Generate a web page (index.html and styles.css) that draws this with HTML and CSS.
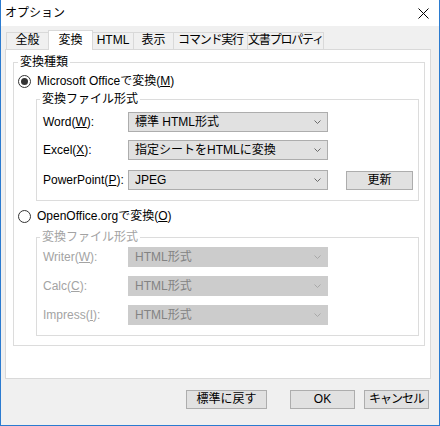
FILE: index.html
```html
<!DOCTYPE html>
<html lang="ja">
<head>
<meta charset="utf-8">
<title>オプション</title>
<link rel="stylesheet" href="styles.css">
</head>
<body>
<div class="window">
  <div class="titlebar">
    <span class="title">オプション</span>
    <svg class="close" width="11" height="11" viewBox="0 0 11 11"><path d="M0.5 0.5 L10.5 10.5 M10.5 0.5 L0.5 10.5" stroke="#000" stroke-width="1" fill="none"/></svg>
  </div>
  <div class="client">
    <div class="tabs">
      <div class="tab w43">全般</div>
      <div class="tab w45 active">変換</div>
      <div class="tab w42">HTML</div>
      <div class="tab w41">表示</div>
      <div class="tab w75 narrow">コマンド実行</div>
      <div class="tab w77 narrow">文書プロパティ</div>
    </div>
    <div class="page">
      <fieldset class="group outer">
        <legend>変換種類</legend>
        <div class="radio-row">
          <span class="radio checked"></span>
          <span>Microsoft Officeで変換(<u>M</u>)</span>
        </div>
        <fieldset class="group inner first">
          <legend>変換ファイル形式</legend>
          <div class="row">
            <span class="label">Word(<u>W</u>):</span>
            <div class="select"><span>標準 HTML形式</span><svg class="chev" width="7" height="4" viewBox="0 0 7 4"><path d="M0.5 0.5 L3.5 3.5 L6.5 0.5" stroke="#6a6a6a" fill="none"/></svg></div>
          </div>
          <div class="row gap8">
            <span class="label">Excel(<u>X</u>):</span>
            <div class="select"><span>指定シートをHTMLに変換</span><svg class="chev" width="7" height="4" viewBox="0 0 7 4"><path d="M0.5 0.5 L3.5 3.5 L6.5 0.5" stroke="#6a6a6a" fill="none"/></svg></div>
          </div>
          <div class="row gap10">
            <span class="label">PowerPoint(<u>P</u>):</span>
            <div class="select"><span>JPEG</span><svg class="chev" width="7" height="4" viewBox="0 0 7 4"><path d="M0.5 0.5 L3.5 3.5 L6.5 0.5" stroke="#6a6a6a" fill="none"/></svg></div>
            <div class="button refresh">更新</div>
          </div>
        </fieldset>
        <div class="radio-row second">
          <span class="radio"></span>
          <span>OpenOffice.orgで変換(<u>O</u>)</span>
        </div>
        <fieldset class="group inner disabled">
          <legend>変換ファイル形式</legend>
          <div class="row">
            <span class="label">Writer(<u>W</u>):</span>
            <div class="select"><span>HTML形式</span><svg class="chev" width="7" height="4" viewBox="0 0 7 4"><path d="M0.5 0.5 L3.5 3.5 L6.5 0.5" stroke="#a8a8a8" fill="none"/></svg></div>
          </div>
          <div class="row gap9">
            <span class="label">Calc(<u>C</u>):</span>
            <div class="select"><span>HTML形式</span><svg class="chev" width="7" height="4" viewBox="0 0 7 4"><path d="M0.5 0.5 L3.5 3.5 L6.5 0.5" stroke="#a8a8a8" fill="none"/></svg></div>
          </div>
          <div class="row gap9">
            <span class="label">Impress(<u>I</u>):</span>
            <div class="select"><span>HTML形式</span><svg class="chev" width="7" height="4" viewBox="0 0 7 4"><path d="M0.5 0.5 L3.5 3.5 L6.5 0.5" stroke="#a8a8a8" fill="none"/></svg></div>
          </div>
        </fieldset>
      </fieldset>
    </div>
    <div class="footer">
      <div class="button reset">標準に戻す</div>
      <div class="button ok">OK</div>
      <div class="button cancel">キャンセル</div>
    </div>
  </div>
</div>
</body>
</html>
```
FILE: styles.css
```css
* { box-sizing: border-box; }
html, body { margin: 0; padding: 0; }
body {
  width: 440px;
  height: 426px;
  overflow: hidden;
  font-family: "Liberation Sans", "Noto Sans CJK JP", sans-serif;
  font-size: 12px;
  color: #000;
  background: #f0f0f0;
}
u { text-decoration: underline; text-underline-offset: 1px; }

.window {
  width: 440px;
  height: 426px;
  border: 1px solid #2b7bd0;
  border-top: none;
  background: #f0f0f0;
  display: flex;
  flex-direction: column;
}
.titlebar {
  height: 26px;
  flex: none;
  background: #fff;
  display: flex;
  align-items: center;
  justify-content: space-between;
  padding: 0 10px 0 4px;
  line-height: 14px;
}
.close { display: block; margin-top: 1px; }

.client {
  padding: 4px 8px 0 4px;
  display: flex;
  flex-direction: column;
}

.tabs {
  display: flex;
  align-items: flex-start;
  height: 19px;
  padding-left: 1px;
}
.tab {
  height: 17px;
  margin-top: 2px;
  border: 1px solid #d9d9d9;
  border-bottom: none;
  background: #f0f0f0;
  text-align: center;
  line-height: 15px;
  white-space: nowrap;
}
.tab + .tab { margin-left: -1px; }
.tab.active {
  height: 20px;
  margin-top: 0;
  background: #fff;
  position: relative;
  z-index: 2;
  line-height: 18px;
}
.tab.narrow { letter-spacing: -1.2px; }
.w41 { width: 41px; }
.w42 { width: 42px; }
.w43 { width: 43px; }
.w45 { width: 45px; }
.w75 { width: 75px; }
.w77 { width: 77px; }

.page {
  height: 330px;
  border: 1px solid #d9d9d9;
  background: #fff;
  padding: 0 5px 0 7px;
}

fieldset.group {
  margin: 0;
  min-inline-size: 0;
  border: 1px solid #dcdcdc;
}
fieldset.group legend {
  padding: 0 2px;
  line-height: 14px;
  height: 14px;
}
fieldset.outer {
  margin: 5px 0 0 0;
  padding: 4px 5px 9px 4px;
}
fieldset.outer > legend { margin-left: 0; }
fieldset.inner {
  margin: 3px 0 0 18px;
  padding: 6px 0 10px 6px;
}
fieldset.inner > legend { margin-left: -3px; }
fieldset.inner.disabled {
  margin-top: 6px;
  padding-top: 3px;
  color: #a3a3a3;
}

.radio-row {
  display: flex;
  align-items: center;
  height: 16px;
  gap: 6px;
  line-height: 14px;
}
.radio-row.second { margin-top: 7px; }
.radio {
  width: 13px;
  height: 13px;
  border: 1px solid #333;
  border-radius: 50%;
  background: #fff;
  display: flex;
  align-items: center;
  justify-content: center;
  flex: none;
}
.radio.checked::after {
  content: "";
  width: 7px;
  height: 7px;
  border-radius: 50%;
  background: #333;
}

.row {
  display: flex;
  align-items: center;
  height: 20px;
}
.row.gap8 { margin-top: 8px; }
.row.gap9 { margin-top: 9px; }
.row.gap10 { margin-top: 10px; }
.label {
  width: 85px;
  flex: none;
  white-space: nowrap;
  line-height: 14px;
}
.select {
  width: 200px;
  height: 20px;
  flex: none;
  border: 1px solid #adadad;
  background: #e1e1e1;
  display: flex;
  align-items: center;
  justify-content: space-between;
  padding: 0 6px 0 6px;
  line-height: 14px;
  white-space: nowrap;
}
.chev { display: block; flex: none; }
.disabled .select {
  background: #cccccc;
  border-color: #cccccc;
  color: #838383;
}

.button {
  height: 19px;
  border: 1px solid #adadad;
  background: #e1e1e1;
  text-align: center;
  line-height: 17px;
  white-space: nowrap;
  flex: none;
}
.refresh { width: 67px; margin-left: 18px; }

.footer {
  display: flex;
  justify-content: flex-end;
  margin-top: 11px;
  padding-right: 2px;
}
.reset { width: 81px; }
.ok { width: 65px; margin-left: 23px; }
.cancel { width: 65px; margin-left: 9px; letter-spacing: -1px; }
```
